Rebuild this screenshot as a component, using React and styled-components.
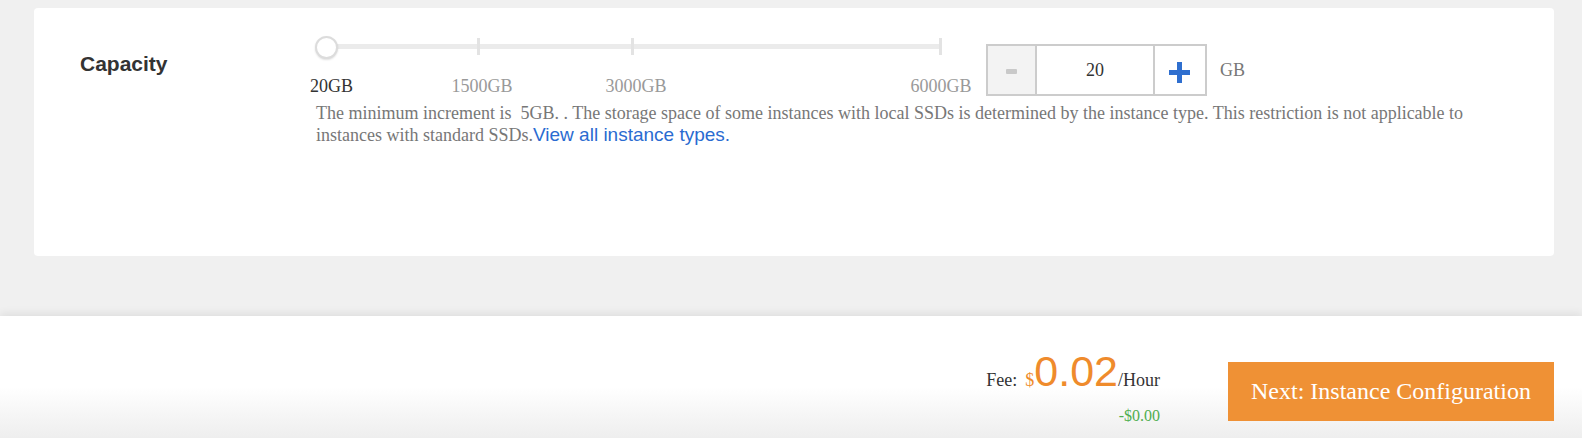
import React from 'react';
import styled, { createGlobalStyle } from 'styled-components';

const GlobalStyle = createGlobalStyle`
  html, body { margin: 0; padding: 0; }
  body {
    background: #f0f0f0;
    font-family: "Liberation Serif", "Times New Roman", serif;
    color: #333;
  }
  * { box-sizing: border-box; }
`;

const Page = styled.div`
  display: flex;
  flex-direction: column;
`;

const Main = styled.div`
  padding: 8px 28px 0 34px;
`;

const Card = styled.section`
  background: #fff;
  border-radius: 4px;
  height: 248px;
  display: flex;
  padding-left: 46px;
`;

const FieldLabel = styled.div`
  width: 230px;
  flex: none;
  padding-top: 44px;
  font-family: "Liberation Sans", Arial, sans-serif;
  font-weight: 700;
  font-size: 21px;
  line-height: 24px;
  color: #333;
`;

const Content = styled.div`
  display: flex;
  flex-direction: column;
  padding-top: 28px;
`;

const TopRow = styled.div`
  display: flex;
  align-items: flex-start;
`;

const SliderBlock = styled.div`
  width: 662px;
  height: 60px;
  padding-left: 14px;
  flex: none;
`;

const Track = styled.div`
  position: relative;
  width: 616px;
  height: 60px;
  padding-top: 8px;
`;

const Rail = styled.div`
  height: 5px;
  background: #ebebeb;
`;

const Tick = styled.span`
  position: absolute;
  top: 2px;
  width: 3px;
  height: 17px;
  margin-left: -1.5px;
  background: #e3e3e3;
`;

const Thumb = styled.span`
  position: absolute;
  top: 0;
  width: 23px;
  height: 23px;
  margin-left: -11.5px;
  border-radius: 50%;
  background: #fff;
  border: 2px solid #dcdcdc;
  box-shadow: 0 1px 2px rgba(0, 0, 0, 0.12);
`;

const MarkLabel = styled.span`
  position: absolute;
  top: 40px;
  font-size: 18px;
  line-height: 20px;
  white-space: nowrap;
  color: ${p => (p.$active ? '#333' : '#999')};
  transform: ${p => (p.$first ? 'translateX(-14px)' : 'translateX(-50%)')};
`;

const Stepper = styled.div`
  display: flex;
  margin-top: 8px;
  margin-left: 14px;
  width: 221px;
  height: 52px;
  border: 2px solid #cccccc;
  flex: none;
`;

const StepButton = styled.button`
  all: unset;
  display: flex;
  align-items: center;
  justify-content: center;
  width: ${p => p.$w}px;
  height: 100%;
  background: ${p => (p.$disabled ? '#f3f3f3' : '#fff')};
  cursor: ${p => (p.$disabled ? 'not-allowed' : 'pointer')};
`;

const MinusBar = styled.span`
  display: block;
  width: 11px;
  height: 5px;
  margin-top: 3px;
  border-radius: 1px;
  background: #c9c9c9;
`;

const PlusIcon = styled.svg`
  margin-top: 4px;
  display: block;
`;

const ValueBox = styled.div`
  width: 120px;
  height: 100%;
  border-left: 2px solid #cccccc;
  border-right: 2px solid #cccccc;
  display: flex;
  align-items: center;
  justify-content: center;
  font-size: 18px;
  color: #333;
`;

const Unit = styled.span`
  margin-top: 8px;
  margin-left: 13px;
  line-height: 52px;
  font-size: 18px;
  color: #777;
`;

const Description = styled.p`
  margin: 6px 0 0;
  padding-left: 6px;
  width: 1196px;
  font-size: 18px;
  line-height: 22px;
  color: #777;
`;

const Link = styled.a`
  font-family: "Liberation Sans", Arial, sans-serif;
  font-size: 19px;
  color: #2a6bd1;
  text-decoration: none;
`;

const Footer = styled.footer`
  margin-top: 60px;
  height: 122px;
  background: linear-gradient(to bottom, #ffffff 0%, #ffffff 58%, #eeeeee 100%);
  box-shadow: 0 -3px 8px rgba(0, 0, 0, 0.07);
  display: flex;
  justify-content: flex-end;
  align-items: flex-start;
  padding-right: 28px;
`;

const FeeBlock = styled.div`
  margin-top: 34px;
  display: flex;
  flex-direction: column;
  align-items: flex-end;
`;

const FeeLine = styled.div`
  display: flex;
  align-items: baseline;
  color: #333;
  font-size: 18px;
  line-height: 18px;
`;

const FeeLabel = styled.span`
  margin-right: 8px;
`;

const Currency = styled.span`
  color: #ef8b2c;
`;

const Amount = styled.span`
  font-family: "Liberation Sans", Arial, sans-serif;
  font-size: 43px;
  line-height: 43px;
  color: #ef8b2c;
`;

const Discount = styled.span`
  margin-top: 15px;
  font-size: 16px;
  line-height: 16px;
  color: #4fae4f;
`;

const NextButton = styled.button`
  all: unset;
  margin-top: 46px;
  margin-left: 68px;
  width: 326px;
  height: 59px;
  background: #ef9135;
  color: #fff;
  font-family: "Liberation Serif", "Times New Roman", serif;
  font-size: 24px;
  text-align: center;
  line-height: 59px;
  cursor: pointer;
`;

const MAX = 6000;
const TRACK_W = 616;
const pos = v => (v / MAX) * TRACK_W;

const marks = [
  { value: 20, label: '20GB', first: true, dx: 0 },
  { value: 1500, label: '1500GB', dx: 4 },
  { value: 3000, label: '3000GB', dx: 4 },
  { value: 6000, label: '6000GB', dx: 1 },
];

export default function App() {
  const value = 20;
  return (
    <Page>
      <GlobalStyle />
      <Main>
        <Card>
          <FieldLabel>Capacity</FieldLabel>
          <Content>
            <TopRow>
              <SliderBlock>
                <Track>
                  <Rail />
                  {marks.slice(1).map(m => (
                    <Tick key={m.value} style={{ left: pos(m.value) }} />
                  ))}
                  <Thumb style={{ left: pos(value) }} />
                  {marks.map(m => (
                    <MarkLabel
                      key={m.label}
                      $first={m.first}
                      $active={m.value <= value}
                      style={{ left: m.first ? 0 : pos(m.value) + m.dx }}
                    >
                      {m.label}
                    </MarkLabel>
                  ))}
                </Track>
              </SliderBlock>
              <Stepper>
                <StepButton $w={47} $disabled>
                  <MinusBar />
                </StepButton>
                <ValueBox>{value}</ValueBox>
                <StepButton $w={48}>
                  <PlusIcon width="21" height="21" viewBox="0 0 21 21">
                    <rect x="8" y="0" width="5" height="21" fill="#2f6fcf" />
                    <rect x="0" y="8" width="21" height="5" fill="#2f6fcf" />
                  </PlusIcon>
                </StepButton>
              </Stepper>
              <Unit>GB</Unit>
            </TopRow>
            <Description>
              The minimum increment is{'\u00a0'} 5GB. . The storage space of some instances with local SSDs is
              determined by the instance type. This restriction is not applicable to instances with standard
              SSDs.<Link href="#">View all instance types.</Link>
            </Description>
          </Content>
        </Card>
      </Main>
      <Footer>
        <FeeBlock>
          <FeeLine>
            <FeeLabel>Fee:</FeeLabel>
            <Currency>$</Currency>
            <Amount>0.02</Amount>
            <span>/Hour</span>
          </FeeLine>
          <Discount>-$0.00</Discount>
        </FeeBlock>
        <NextButton>Next: Instance Configuration</NextButton>
      </Footer>
    </Page>
  );
}
